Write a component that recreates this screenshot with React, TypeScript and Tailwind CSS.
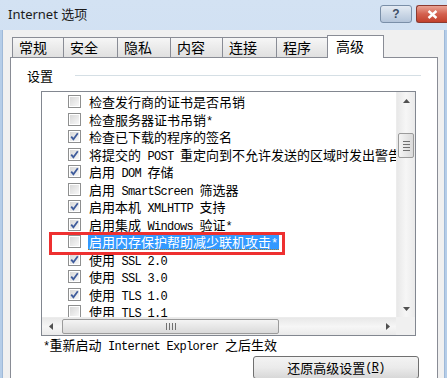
import React from "react";

const ROWS = [
  { label: "检查发行商的证书是否吊销", checked: false },
  { label: "检查服务器证书吊销*", checked: false },
  { label: "检查已下载的程序的签名", checked: true },
  { label: "将提交的 POST 重定向到不允许发送的区域时发出警告", checked: true },
  { label: "启用 DOM 存储", checked: true },
  { label: "启用 SmartScreen 筛选器", checked: false },
  { label: "启用本机 XMLHTTP 支持", checked: true },
  { label: "启用集成 Windows 验证*", checked: true },
  { label: "启用内存保护帮助减少联机攻击*", checked: false, selected: true },
  { label: "使用 SSL 2.0", checked: true },
  { label: "使用 SSL 3.0", checked: true },
  { label: "使用 TLS 1.0", checked: true },
  { label: "使用 TLS 1.1", checked: false },
];

const TABS = [
  { label: "常规", w: "w-[52px]" },
  { label: "安全", w: "w-[55px]" },
  { label: "隐私", w: "w-[54px]" },
  { label: "内容", w: "w-[53px]" },
  { label: "连接", w: "w-[55px]" },
  { label: "程序", w: "w-[52px]" },
];

// SimSun draws latin as half-width mono, so ascii runs get a mono font
function Mixed({ text }: { text: string }) {
  return (
    <>
      {text.split(/([\x20-\x7e]+)/).map((s, i) =>
        /^[\x20-\x7e]+$/.test(s) ? (
          <span key={i} className="font-['Liberation_Mono',monospace] text-[12px] tracking-[-0.7px]">
            {s}
          </span>
        ) : (
          <React.Fragment key={i}>{s}</React.Fragment>
        )
      )}
    </>
  );
}

function Checkbox({ checked }: { checked: boolean }) {
  return (
    <div className="w-[13px] h-[13px] shrink-0 border border-[#8e8f8f] bg-white p-px">
      <div className="w-full h-full bg-gradient-to-br from-[#d8d8d8] to-[#f8f8f8] flex items-center justify-center">
        {checked && (
          <svg width="9" height="9" viewBox="0 0 9 9">
            <path d="M1.2 4.6 L3.4 7.2 L7.8 1.2" fill="none" stroke="#3f5c9c" strokeWidth="1.8" />
          </svg>
        )}
      </div>
    </div>
  );
}

function Arrow({ dir }: { dir: "up" | "down" | "left" | "right" }) {
  const d = {
    up: "M0 4 L3.5 0 L7 4 Z",
    down: "M0 0 L3.5 4 L7 0 Z",
    left: "M4 0 L0 3.5 L4 7 Z",
    right: "M0 0 L4 3.5 L0 7 Z",
  }[dir];
  const vertical = dir === "up" || dir === "down";
  return (
    <svg width={vertical ? 7 : 4} height={vertical ? 4 : 7} viewBox={vertical ? "0 0 7 4" : "0 0 4 7"}>
      <path d={d} fill="#505050" />
    </svg>
  );
}

export default function App() {
  return (
    <div className="relative w-[447px] h-[378px] overflow-hidden flex flex-col bg-gradient-to-b from-[#d3e2f3] to-[#c3d8ee] font-['Noto_Sans','Noto_Sans_CJK_SC',sans-serif] text-black">
      {/* title bar */}
      <div className="h-[30px] shrink-0 flex items-start">
        <span className="pl-[8px] pt-[5px] text-[13px] leading-[18px] text-[#1b1b1b]">Internet 选项</span>
        <div className="ml-auto mt-[5px] flex gap-[4px]">
          <div className="w-[32px] h-[18px] rounded-[3px] border border-[#7a8fa8] bg-gradient-to-b from-[#e4ebf3] to-[#b4c5da] flex items-center justify-center">
            <span className="text-[12px] font-bold leading-none text-[#3d4e66] font-['Liberation_Sans',sans-serif]">?</span>
          </div>
          <div className="w-[31px] h-[18px] rounded-l-[3px] border border-r-0 border-[#8c3a30] bg-gradient-to-b from-[#e9a395] via-[#d3614f] to-[#c2402c] flex items-center justify-center">
            <svg width="11" height="9" viewBox="0 0 11 9">
              <path d="M1.5 1 L9.5 8 M9.5 1 L1.5 8" stroke="#fff" strokeWidth="2.4" />
            </svg>
          </div>
        </div>
      </div>

      {/* body */}
      <div className="flex-1 flex">
        <div className="w-[3px] bg-[#b5cde8] border-r border-[#9fb9d8]" />
        <div className="flex-1 bg-[#f0f0f0] flex flex-col pl-[7px] pr-[6px] pt-[5px]">
          <div className="h-[22px] flex items-end ml-[2px]">
            {TABS.map((t, i) => (
              <div
                key={t.label}
                className={`${t.w} ${i > 0 ? "-ml-px" : ""} h-[20px] border border-b-0 border-[#898c95] bg-gradient-to-b from-[#f6f6f6] to-[#e0e0e0] flex items-center pl-[6px] text-[14px] font-['Noto_Sans_CJK_SC',sans-serif]`}
              >
                {t.label}
              </div>
            ))}
            <div className="relative z-10 -ml-px -mb-px w-[57px] h-[23px] border border-b-0 border-[#898c95] bg-white flex items-center pl-[8px] pb-[2px] text-[14px] font-['Noto_Sans_CJK_SC',sans-serif]">
              高级
            </div>
          </div>

          <div className="flex-1 border border-b-0 border-[#898c95] bg-white flex flex-col pt-[8px] font-['Noto_Sans_CJK_SC',sans-serif]">
            <div className="h-[18px] flex items-center pl-[16px] pr-[16px]">
              <span className="text-[13px] leading-none">设置</span>
              <div className="ml-[22px] flex-1 h-px bg-[#d5dfe5]" />
            </div>

            {/* list box */}
            <div className="mt-[7px] ml-[30px] w-[375px] h-[245px] border border-[#828790] flex flex-col">
              <div className="h-[225px] flex">
                <div className="w-[354px] overflow-hidden pt-px text-[13px]">
                  {ROWS.map((r) => (
                    <div key={r.label} className="h-[17.5px] flex items-center pl-[26px] whitespace-pre">
                      <Checkbox checked={r.checked} />
                      <span
                        className={`ml-[7px] px-px h-[17px] leading-[17px] ${
                          r.selected ? "bg-[#3399ff] text-white border-b border-dotted border-[#b07a20]" : ""
                        }`}
                      >
                        <Mixed text={r.label} />
                      </span>
                    </div>
                  ))}
                </div>
                {/* vertical scrollbar */}
                <div className="w-[19px] flex flex-col bg-gradient-to-r from-[#e8e8e8] via-[#f6f6f6] to-[#eaeaea] border-l border-[#ececec]">
                  <div className="h-[17px] flex items-center justify-center">
                    <Arrow dir="up" />
                  </div>
                  <div className="mt-[24px] ml-px w-[16px] h-[25px] rounded-[2px] border border-[#9b9b9b] bg-gradient-to-r from-[#f4f4f4] to-[#dadada] flex flex-col items-center justify-center gap-[2px]">
                    <div className="w-[7px] h-px bg-[#707070]" />
                    <div className="w-[7px] h-px bg-[#707070]" />
                    <div className="w-[7px] h-px bg-[#707070]" />
                    <div className="w-[7px] h-px bg-[#707070]" />
                  </div>
                  <div className="mt-auto h-[17px] flex items-center justify-center">
                    <Arrow dir="down" />
                  </div>
                </div>
              </div>
              <div className="h-[18px] flex">
                {/* horizontal scrollbar */}
                <div className="w-[354px] flex items-center bg-gradient-to-b from-[#e8e8e8] via-[#f6f6f6] to-[#eaeaea] border-t border-[#ececec]">
                  <div className="w-[17px] flex items-center justify-center">
                    <Arrow dir="left" />
                  </div>
                  <div className="ml-[3px] w-[217px] h-[15px] rounded-[2px] border border-[#9b9b9b] bg-gradient-to-b from-[#f4f4f4] to-[#dadada] flex items-center justify-center gap-[2px]">
                    <div className="w-px h-[7px] bg-[#707070]" />
                    <div className="w-px h-[7px] bg-[#707070]" />
                    <div className="w-px h-[7px] bg-[#707070]" />
                    <div className="w-px h-[7px] bg-[#707070]" />
                  </div>
                  <div className="ml-auto w-[17px] flex items-center justify-center">
                    <Arrow dir="right" />
                  </div>
                </div>
                <div className="w-[19px] bg-[#f0f0f0]" />
              </div>
            </div>

            <div className="ml-[32px] h-[17px] leading-[17px] text-[13px] whitespace-pre">
              <Mixed text="*重新启动 Internet Explorer 之后生效" />
            </div>

            <div className="self-end mr-[18px] mt-[3px] w-[166px] h-[23px] rounded-[3px] border border-[#707070] bg-gradient-to-b from-[#f3f3f3] via-[#ebebeb] to-[#d8d8d8] flex items-center justify-center text-[13px] whitespace-pre">
              还原高级设置
              <span className="font-['Liberation_Mono',monospace] text-[12px] tracking-[-0.7px]">
                (<span className="underline">R</span>)
              </span>
            </div>
          </div>
        </div>
        <div className="w-[3px] bg-[#b5cde8] border-l border-[#9fb9d8]" />
      </div>

      {/* red annotation box */}
      <div className="absolute left-[49px] top-[232px] w-[236px] h-[23px] border-[3px] border-[#ee3030]" />
    </div>
  );
}
